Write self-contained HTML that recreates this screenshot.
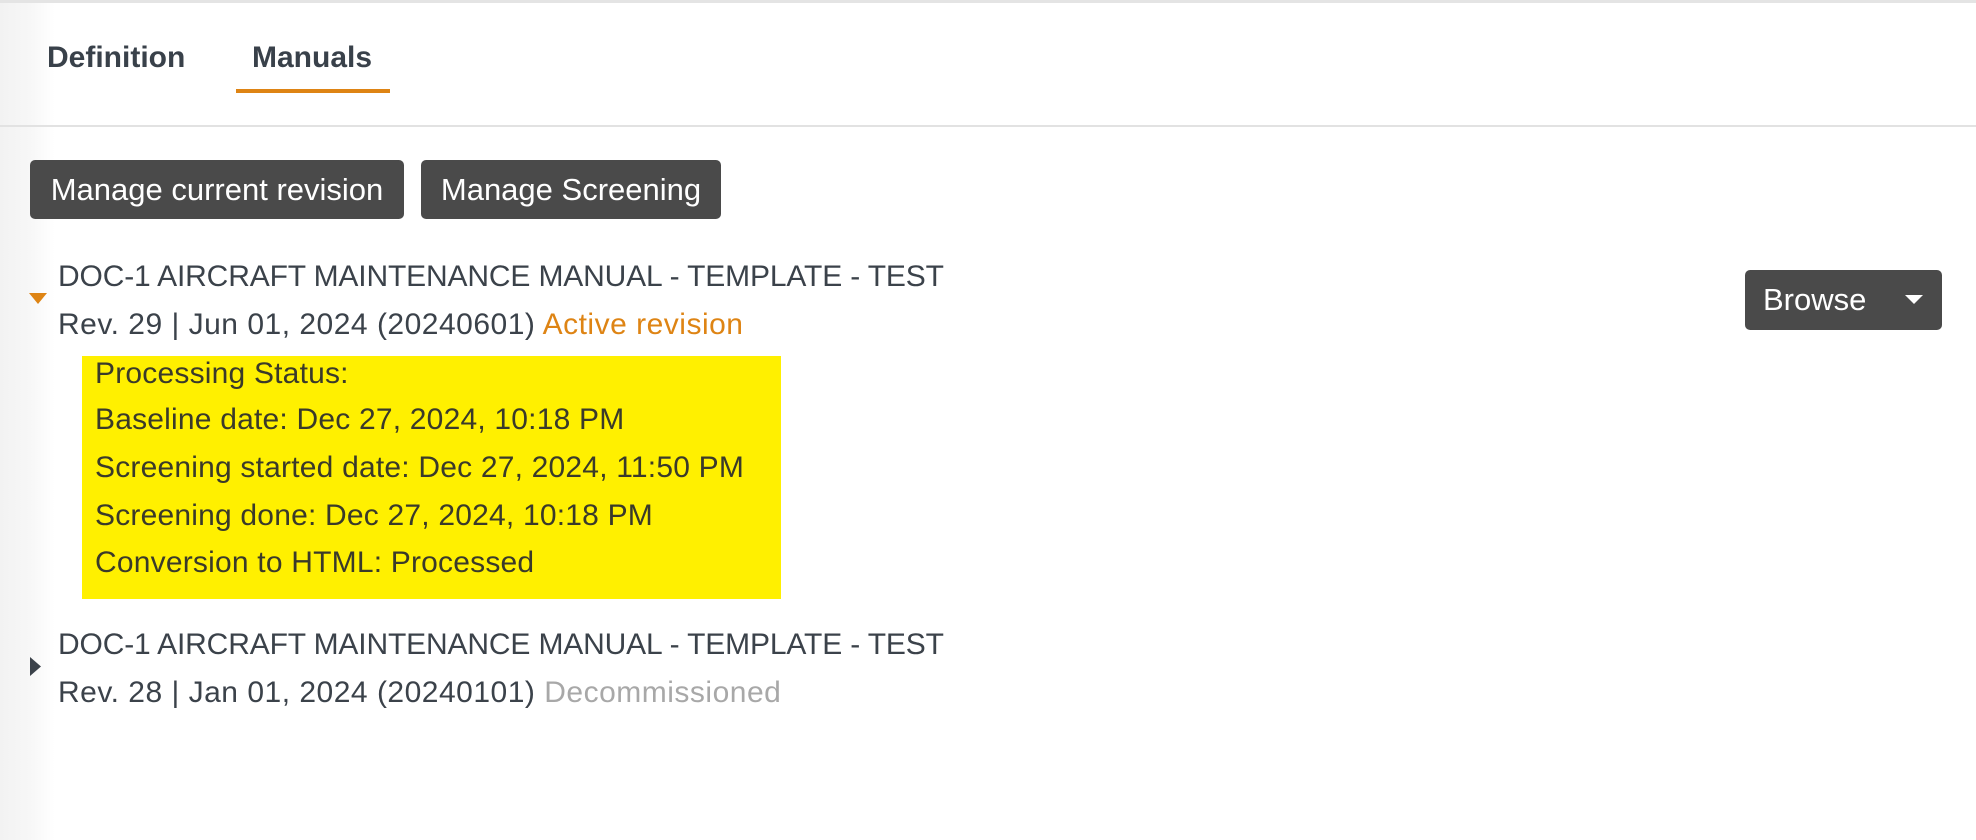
<!DOCTYPE html>
<html><head><meta charset="utf-8"><style>
*{margin:0;padding:0;box-sizing:border-box}
body{width:1976px;height:840px;overflow:hidden;background:linear-gradient(90deg,#f2f2f2 0,#f7f7f7 30px,#fff 55px);font-family:"Liberation Sans",sans-serif;color:#3b424a;position:relative}
.a{position:absolute;white-space:nowrap}
.topline{position:absolute;left:0;top:0;width:1976px;height:3px;background:#e4e4e4}
.div{position:absolute;left:0;top:125px;width:1976px;height:2px;background:#e2e2e2}
.tab{font-size:30px;font-weight:bold;color:#39414a}
.ul{position:absolute;left:236px;top:89px;width:154px;height:4px;background:#de8414}
.btn{position:absolute;background:#4a4a4a;color:#fff;border-radius:5px;font-size:31px;display:flex;align-items:center;justify-content:center}
.t{font-size:30px;letter-spacing:-0.15px}
.r{font-size:30px;letter-spacing:0.5px}
.y{position:absolute;left:82px;top:356px;width:699px;height:243px;background:#fff000}
.y div{position:absolute;left:13px;font-size:30px;letter-spacing:0.2px;color:#3a3a2a;white-space:nowrap}
</style></head><body>
<div class="topline"></div>
<div class="a tab" style="left:47px;top:41px">Definition</div>
<div class="a tab" style="left:252px;top:41px">Manuals</div>
<div class="ul"></div>
<div class="div"></div>
<div class="btn" style="left:30px;top:160px;width:374px;height:59px">Manage current revision</div>
<div class="btn" style="left:421px;top:160px;width:300px;height:59px">Manage Screening</div>
<svg class="a" style="left:29px;top:293px" width="18" height="12"><polygon points="0,0 18,0 9,11" fill="#de8414"/></svg>
<div class="a t" style="left:58px;top:260px">DOC-1 AIRCRAFT MAINTENANCE MANUAL - TEMPLATE - TEST</div>
<div class="a r" style="left:58px;top:308px">Rev. 29 | Jun 01, 2024 (20240601) <span style="color:#de8414">Active revision</span></div>
<div class="y">
<div style="top:1px">Processing Status:</div>
<div style="top:47px">Baseline date: Dec 27, 2024, 10:18 PM</div>
<div style="top:95px">Screening started date: Dec 27, 2024, 11:50 PM</div>
<div style="top:143px">Screening done: Dec 27, 2024, 10:18 PM</div>
<div style="top:190px">Conversion to HTML: Processed</div>
</div>
<svg class="a" style="left:30px;top:657px" width="11" height="19"><polygon points="0,0 11,9.5 0,19" fill="#3b424a"/></svg>
<div class="a t" style="left:58px;top:628px">DOC-1 AIRCRAFT MAINTENANCE MANUAL - TEMPLATE - TEST</div>
<div class="a r" style="left:58px;top:676px">Rev. 28 | Jan 01, 2024 (20240101) <span style="color:#a8a8a8">Decommissioned</span></div>
<div class="btn" style="left:1745px;top:270px;width:197px;height:60px;justify-content:flex-start;padding-left:18px">Browse</div>
<svg class="a" style="left:1905px;top:295px" width="18" height="10"><polygon points="0,0 18,0 9,9" fill="#fff"/></svg>
</body></html>
